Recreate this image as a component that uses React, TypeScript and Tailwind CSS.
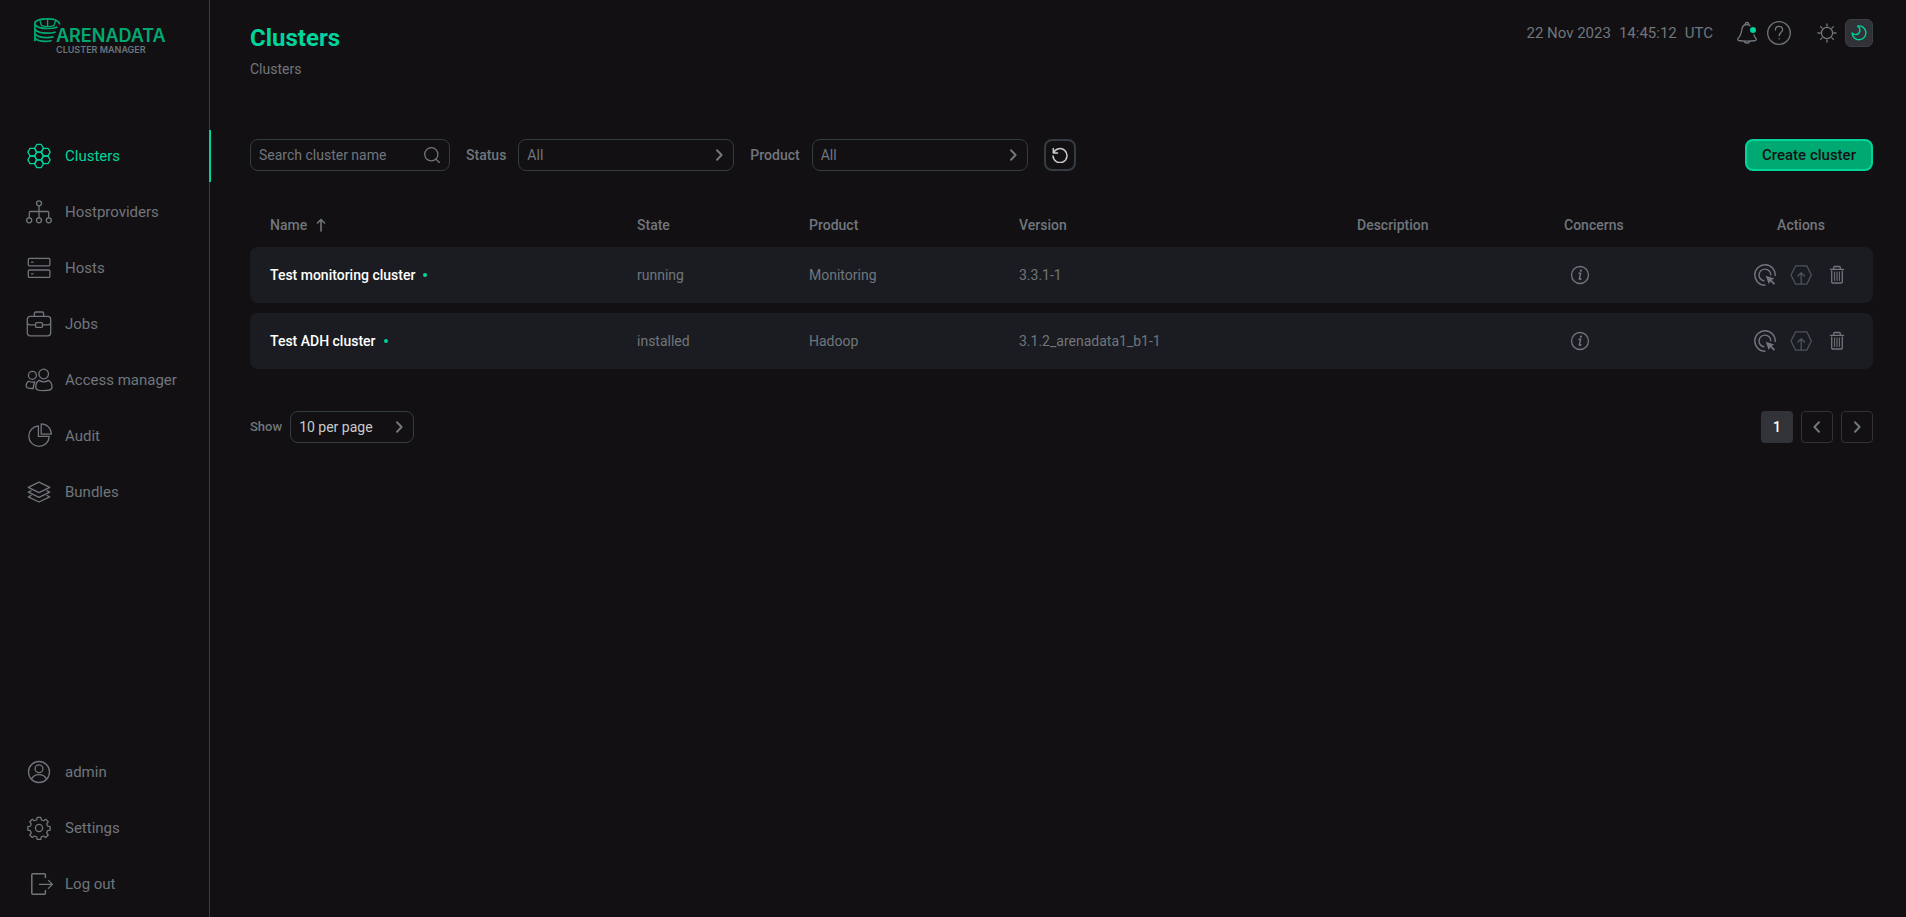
import { useState } from 'react'
import type { ReactNode } from 'react'
import clsx from 'clsx'

type IconProps = { size?: number; className?: string; children: ReactNode }

const Icon = ({ size = 28, className, children }: IconProps) => (
    <svg width={size} height={size} viewBox={`0 0 ${size} ${size}`} fill="none" stroke="currentColor" strokeWidth="1.3" strokeLinecap="round" strokeLinejoin="round" className={clsx('shrink-0', className)} aria-hidden="true">
        {children}
    </svg>
)

const hexagon = (cx: number, cy: number, r: number) =>
    [0, 60, 120, 180, 240, 300]
        .map((a) => `${(cx + r * Math.cos((a * Math.PI) / 180)).toFixed(2)},${(cy + r * Math.sin((a * Math.PI) / 180)).toFixed(2)}`)
        .join(' ')

const ClustersIcon = () => (
    <Icon>
        {[[14, 14], [14, 6.3], [14, 21.7], [7.3, 10.15], [7.3, 17.85], [20.7, 10.15], [20.7, 17.85]].map(([x, y]) => (
            <polygon key={`${x}-${y}`} points={hexagon(x, y, 4.45)} />
        ))}
    </Icon>
)

const HostprovidersIcon = () => (
    <Icon>
        <circle cx="14" cy="5.3" r="2.5" />
        <path d="M14 8v11.6M4.3 19.6v-5.1a1 1 0 0 1 1-1h17.4a1 1 0 0 1 1 1v5.1" />
        <circle cx="4.2" cy="22.3" r="2.5" />
        <circle cx="14" cy="22.3" r="2.5" />
        <circle cx="23.8" cy="22.3" r="2.5" />
    </Icon>
)

const HostsIcon = () => (
    <Icon>
        <rect x="3.3" y="4.4" width="21.6" height="7.4" rx="1.2" />
        <rect x="3.3" y="16" width="21.6" height="7.4" rx="1.2" />
        <path d="M6.5 8.2h1.6M6.5 19.8h1.6" />
    </Icon>
)

const JobsIcon = () => (
    <Icon>
        <rect x="2.3" y="6.4" width="23.4" height="19.4" rx="3" />
        <path d="M9.4 6.2V3.4a1.4 1.4 0 0 1 1.4-1.4h6.4a1.4 1.4 0 0 1 1.4 1.4v2.8" />
        <rect x="10.6" y="12.6" width="6.8" height="4.8" rx="1" />
        <path d="M2.4 12.8c.3 1.4 1.2 2.1 2.6 2.1h5.4M25.6 12.8c-.3 1.4-1.2 2.1-2.6 2.1h-5.4" />
    </Icon>
)

const AccessIcon = () => (
    <Icon>
        <circle cx="7.4" cy="9.3" r="4" />
        <circle cx="18.7" cy="8" r="4.8" />
        <path d="M14.2 14.4c-2.4 1.2-3.6 3.6-3.4 7 0 2.4 4 3.2 8 3.2s8.2-.8 8.2-3.2c0-3.4-1-5.8-3.6-7-2.6 1.7-6.5 1.7-9.2 0z" />
        <path d="M4 15.2c-2.1 1-2.9 3-2.7 5.5 0 1.5 3.6 1.9 7 1.8.1-2.3.4-4.4 1.5-6.6-2 .4-4.1.3-5.8-.7z" />
    </Icon>
)

const AuditIcon = () => (
    <Icon>
        <path d="M13.4 3.9A10.2 10.2 0 1 0 24.2 14.4H13.4z" />
        <path d="M16.2 1.8v10.3h10.1A10.2 10.2 0 0 0 16.2 1.8z" />
    </Icon>
)

const BundlesIcon = () => (
    <Icon>
        <path d="M14 4.2l10.7 5.2L14 14.7 3.3 9.4z" />
        <path d="M6 12.8l-2.7 1.3L14 19.4l10.7-5.3-2.7-1.3M6 17.5l-2.7 1.3L14 24l10.7-5.2-2.7-1.3" />
    </Icon>
)

const UserIcon = () => (
    <Icon>
        <circle cx="14" cy="14" r="10.5" />
        <circle cx="14" cy="10.7" r="3.9" />
        <path d="M6.4 21.2c1.4-3 4.2-4.6 7.6-4.6s6.2 1.6 7.6 4.6" />
    </Icon>
)

const SettingsIcon = () => (
    <Icon>
        <circle cx="14" cy="14" r="3.6" />
        <path d="M12.2 3.3h3.6l.5 2.6c.8.2 1.5.5 2.2.9l2.2-1.5 2.5 2.5-1.5 2.2c.4.7.7 1.4.9 2.2l2.5.4v3.6l-2.5.5c-.2.8-.5 1.5-.9 2.2l1.5 2.1-2.5 2.5-2.2-1.5c-.7.4-1.4.7-2.2.9l-.5 2.5h-3.6l-.5-2.5c-.8-.2-1.5-.5-2.2-.9l-2.2 1.5-2.5-2.5 1.5-2.1c-.4-.7-.7-1.4-.9-2.2l-2.5-.5v-3.6l2.5-.4c.2-.8.5-1.5.9-2.2l-1.5-2.2 2.5-2.5 2.2 1.5c.7-.4 1.4-.7 2.2-.9z" />
    </Icon>
)

const LogoutIcon = () => (
    <Icon>
        <path d="M20.4 7.6V4.8a1 1 0 0 0-1-1H7.8a1 1 0 0 0-1 1v18.400a1 1 0 0 0 1 1h11.6a1 1 0 0 0 1-1v-2.8" strokeWidth="1.5" />
        <path d="M14.5 14.4h12.8M23.4 10.4l4 4-4 4" />
    </Icon>
)

const BellIcon = () => (
    <Icon size={24}>
        <path d="M15 4.8C14.2 3.9 13.2 3.5 12 3.5c-3 0-4.700 2-5.100 4.800-.4 3.600-1 6.300-3.900 9.200-.6.7-.4 1.800.6 2 5.400.7 11.400.7 16.800 0 1-.2 1.200-1.300.6-2-.9-1-1.600-2.200-2.200-3.700" />
        <path d="M10.2 3.3a1.8 1.8 0 0 1 3.6 0M9.4 20.6c1 2 4.2 2 5.2 0" />
        <circle cx="18" cy="9" r="3" fill="#00d49d" stroke="none" />
    </Icon>
)

const HelpIcon = () => (
    <Icon size={24}>
        <circle cx="12" cy="12" r="11.3" />
        <path d="M8.4 9c0-2.2 1.5-3.6 3.6-3.6s3.6 1.4 3.6 3.4c0 2.6-3.4 2.9-3.4 5.9M12.2 17.6v.3" />
    </Icon>
)

const SunIcon = () => (
    <Icon size={20}>
        <circle cx="10" cy="10" r="5.6" />
        <path d="M10 1v2.2M10 16.8V19M1 10h2.2M16.8 10H19M3.6 3.6l1.5 1.5M14.9 14.9l1.5 1.5M3.6 16.4l1.5-1.5M14.9 5.1l1.5-1.5" />
    </Icon>
)

const MoonIcon = () => (
    <Icon size={16}>
        <path d="M6.5 1.1A6.9 6.9 0 1 1 1.1 7.9C2 9 3.300 9.700 4.800 9.700A4.600 4.600 0 0 0 6.500 1.100z" />
    </Icon>
)

const SearchIcon = () => (
    <Icon size={16} className="pointer-events-none">
        <circle cx="7.3" cy="7.3" r="6.6" />
        <path d="M12 12.2l3.4 3.3" />
    </Icon>
)

const ResetIcon = () => (
    <Icon size={16}>
        <path d="M1.3 1.6v4.3h4.3M1.6 5.7a7 7 0 1 1-.6 3.3" strokeWidth="1.5" />
    </Icon>
)

const Chevron = ({ left, className }: { left?: boolean; className?: string }) => (
    <svg width="12" height="12" viewBox="0 0 12 12" fill="none" stroke="currentColor" strokeWidth="2" strokeLinecap="round" strokeLinejoin="round" className={clsx('shrink-0', left && 'rotate-180', className)} aria-hidden="true">
        <path d="M4 1.2L8.600 6 4 10.8" />
    </svg>
)

const InfoIcon = () => (
    <Icon size={20}>
        <circle cx="10" cy="10" r="8.5" />
        <path d="M9 8.3h1.6L9.4 13.6c-.1.7.6.8 1.5.2" strokeWidth="1.5" />
        <circle cx="10.9" cy="5.7" r="1.1" fill="currentColor" stroke="none" />
    </Icon>
)

const RunIcon = () => (
    <Icon size={24}>
        <path d="M12 22.2A10.2 10.2 0 1 1 22.2 12.5M10.8 17.8A5.9 5.9 0 1 1 17.8 11.8" strokeWidth="1.4" />
        <path d="M12.7 12.7l3 8.3 1.6-2.7 3.5 3.5 1.3-1.3-3.5-3.5 2.7-1.5z" fill="currentColor" stroke="none" />
    </Icon>
)

const UpgradeIcon = () => (
    <Icon size={24}>
        <path d="M2 12l4.700-9.200h11.1L22.3 12l-4.500 9.200H6.7zM12.200 21V9.8M8.9 13l3.300-3.300 3.300 3.300" />
    </Icon>
)

const TrashIcon = () => (
    <Icon size={24}>
        <path d="M5.4 6.3h13.2M8.7 6V4.5a1 1 0 0 1 1-1h4.6a1 1 0 0 1 1 1V6M6.7 8v11a1 1 0 0 0 1 1h8.6a1 1 0 0 0 1-1V8" />
        <path d="M9.6 9v8.5M12 9v8.5M14.4 9v8.5" strokeWidth="1" />
    </Icon>
)

const Logo = () => (
    <svg width="140" height="38" viewBox="0 0 140 38" className="ml-8" role="img" aria-label="Arenadata Cluster Manager">
        <g fill="none" stroke="#00a972" strokeWidth="1.7" strokeLinecap="round">
            <path d="M27.6 6.8C26.5 3.5 21.5 1.8 15.8 1.8 8.5 1.8 2.9 3.6 2.9 6.5v17" />
            <path d="M8 3.5l1.5 5.2c3.4 1 9.5 1 12.4 0L23.6 3.5M15.6 2v6.7" strokeWidth="1.3" />
            <path d="M3 7.5c1.5 2.8 7 4 12.8 4 3.8 0 6.8-.4 9-1.3M3 12.2c1.8 2.8 7 3.9 12.5 3.9 3.2 0 5.6-.3 7.5-.9M3 16.8c1.8 2.7 6.6 3.8 11.8 3.8 2.8 0 4.7-.2 6.2-.7M3 21c1.6 2.4 6 3.400 10.500 3.400 2.600 0 4.200-.3 5.500-.7" />
        </g>
        <text x="24" y="25" fill="#00a972" fontFamily="Inter, sans-serif" fontSize="18" fontWeight="600">ARENADATA</text>
        <text x="24" y="36" fill="#6b747b" fontFamily="Inter, sans-serif" fontSize="9" fontWeight="600">CLUSTER MANAGER</text>
    </svg>
)

const mainMenu = [
    { label: 'Clusters', icon: <ClustersIcon /> },
    { label: 'Hostproviders', icon: <HostprovidersIcon /> },
    { label: 'Hosts', icon: <HostsIcon /> },
    { label: 'Jobs', icon: <JobsIcon /> },
    { label: 'Access manager', icon: <AccessIcon /> },
    { label: 'Audit', icon: <AuditIcon /> },
    { label: 'Bundles', icon: <BundlesIcon /> },
]

const userMenu = [
    { label: 'admin', icon: <UserIcon /> },
    { label: 'Settings', icon: <SettingsIcon /> },
    { label: 'Log out', icon: <LogoutIcon /> },
]

const clusters = [
    { name: 'Test monitoring cluster', state: 'running', product: 'Monitoring', version: '3.3.1-1' },
    { name: 'Test ADH cluster', state: 'installed', product: 'Hadoop', version: '3.1.2_arenadata1_b1-1' },
]

type MenuProps = { items: typeof mainMenu; active?: string; onSelect?: (label: string) => void }

const Menu = ({ items, active, onSelect }: MenuProps) => (
    <ul className="flex flex-col gap-1">
        {items.map((item) => (
            <li key={item.label} className="relative">
                <a href="#" onClick={() => onSelect?.(item.label)} className={clsx('flex h-[52px] items-center gap-3 pl-[25px] text-[15px]', active === item.label ? 'text-[#00d49d]' : 'text-[#70767c] hover:text-white')}>
                    {item.icon}
                    {item.label}
                </a>
                {active === item.label && <span className="absolute top-0 -right-0.5 h-full w-0.5 bg-[#00d49d]" />}
            </li>
        ))}
    </ul>
)

const FilterSelect = ({ id, label, options }: { id: string; label: string; options: string[] }) => (
    <div className="flex items-center gap-3">
        <label htmlFor={id} className="text-sm font-medium">{label}</label>
        <div className="relative">
            <select id={id} className="h-8 w-[216px] appearance-none rounded-lg border border-[#343b42] bg-[#121013] pl-2 text-sm outline-none">
                {options.map((o) => <option key={o}>{o}</option>)}
            </select>
            <Chevron className="pointer-events-none absolute top-[10px] right-[9px]" />
        </div>
    </div>
)

const App = () => {
    const [page, setPage] = useState('Clusters')
    const [search, setSearch] = useState('')

    return (
        <div className="flex min-h-screen bg-[#121013] font-['Roboto',sans-serif] text-[#70767c]">
            <aside className="flex w-[210px] shrink-0 flex-col border-r border-[#3b3d41] pb-[7px]">
                <div className="h-[130px] pt-[17px]">
                    <Logo />
                </div>
                <nav className="flex grow flex-col justify-between">
                    <Menu items={mainMenu} active={page} onSelect={setPage} />
                    <Menu items={userMenu} />
                </nav>
            </aside>

            <main className="grow pr-[33px] pl-10">
                <header className="flex h-[139px] items-start justify-between pt-[19px]">
                    <div>
                        <h1 className="text-2xl leading-[38px] font-bold text-[#00d49d]">Clusters</h1>
                        <p className="text-sm leading-6">Clusters</p>
                    </div>
                    <div className="flex h-7 items-center">
                        <time className="flex gap-2 text-[15px]">
                            <span>22 Nov 2023</span>
                            <span>14:45:12</span>
                            <span>UTC</span>
                        </time>
                        <button type="button" aria-label="Notifications" className="ml-[22px]"><BellIcon /></button>
                        <button type="button" aria-label="Help" className="ml-2"><HelpIcon /></button>
                        <button type="button" aria-label="Light theme" className="ml-[26px]"><SunIcon /></button>
                        <button type="button" aria-label="Dark theme" className="ml-2 flex size-7 items-center justify-center rounded-md border border-[#3a3f45] bg-[#303237] text-[#00d49d]"><MoonIcon /></button>
                    </div>
                </header>

                <div className="flex items-center gap-4">
                    <div className="flex h-8 w-[200px] items-center rounded-lg border border-[#343b42] pr-[9px] pl-2">
                        <input aria-label="Search cluster name" placeholder="Search cluster name" value={search} onChange={(e) => setSearch(e.target.value)} className="min-w-0 grow bg-transparent text-sm outline-none placeholder:text-[#70767c]" />
                        <SearchIcon />
                    </div>
                    <FilterSelect id="status" label="Status" options={['All', 'running', 'installed']} />
                    <FilterSelect id="product" label="Product" options={['All', 'Monitoring', 'Hadoop']} />
                    <button type="button" aria-label="Reset filters" onClick={() => setSearch('')} className="flex size-8 items-center justify-center rounded-lg border-2 border-[#343b42] text-[#c9cacc]"><ResetIcon /></button>
                    <button type="button" className="ml-auto h-8 w-32 rounded-lg border-2 border-[#00d49d] bg-[#00a972] text-[15px] font-medium text-[#121013]">Create cluster</button>
                </div>

                <table className="mt-8 w-full table-fixed border-separate border-spacing-0 text-sm">
                    <colgroup>
                        <col className="w-[367px]" />
                        <col className="w-[172px]" />
                        <col className="w-[210px]" />
                        <col className="w-[338px]" />
                        <col className="w-[207px]" />
                        <col className="w-[185px]" />
                        <col className="w-[144px]" />
                    </colgroup>
                    <thead>
                        <tr className="h-11 text-left [&>th]:px-5 [&>th]:font-medium">
                            <th>
                                <span className="flex items-center gap-2">
                                    Name
                                    <Icon size={14}><path d="M6 13V1.5M2.500 5L6 1.5 9.500 5" strokeWidth="1.6" /></Icon>
                                </span>
                            </th>
                            <th>State</th>
                            <th>Product</th>
                            <th>Version</th>
                            <th>Description</th>
                            <th>Concerns</th>
                            <th className="text-center">Actions</th>
                        </tr>
                    </thead>
                    {clusters.map((c) => (
                        <tbody key={c.name} className="after:block after:h-[10px]">
                            <tr className="h-14 [&>td]:bg-[#1b1c21] [&>td]:px-5">
                                <td className="rounded-l-lg">
                                    <a href="#" className="flex items-center gap-2 font-medium text-white">
                                        {c.name}
                                        <span className="size-1 rounded-full bg-[#00d49d]" />
                                    </a>
                                </td>
                                <td>{c.state}</td>
                                <td>{c.product}</td>
                                <td>{c.version}</td>
                                <td></td>
                                <td>
                                    <button type="button" aria-label="Concerns" className="ml-[6px] block"><InfoIcon /></button>
                                </td>
                                <td className="rounded-r-lg">
                                    <div className="flex justify-center gap-3">
                                        <button type="button" aria-label="Run action"><RunIcon /></button>
                                        <button type="button" aria-label="Upgrade" className="text-[#4a545b]"><UpgradeIcon /></button>
                                        <button type="button" aria-label="Delete"><TrashIcon /></button>
                                    </div>
                                </td>
                            </tr>
                        </tbody>
                    ))}
                </table>

                <footer className="mt-8 flex items-center justify-between">
                    <div className="flex items-center gap-2">
                        <label htmlFor="per-page" className="text-[13px] font-medium">Show</label>
                        <div className="relative">
                            <select id="per-page" className="h-8 w-[124px] appearance-none rounded-lg border border-[#343b42] bg-[#121013] pl-2 text-sm text-[#c9cacc] outline-none">
                                <option>10 per page</option>
                                <option>30 per page</option>
                                <option>50 per page</option>
                            </select>
                            <Chevron className="pointer-events-none absolute top-[10px] right-[9px]" />
                        </div>
                    </div>
                    <div className="flex gap-2">
                        <button type="button" className="size-8 rounded bg-[#313338] text-sm font-medium text-white">1</button>
                        <button type="button" aria-label="Previous page" className="flex size-8 items-center justify-center rounded border border-[#313338]"><Chevron left /></button>
                        <button type="button" aria-label="Next page" className="flex size-8 items-center justify-center rounded border border-[#313338]"><Chevron /></button>
                    </div>
                </footer>
            </main>
        </div>
    )
}

export default App
